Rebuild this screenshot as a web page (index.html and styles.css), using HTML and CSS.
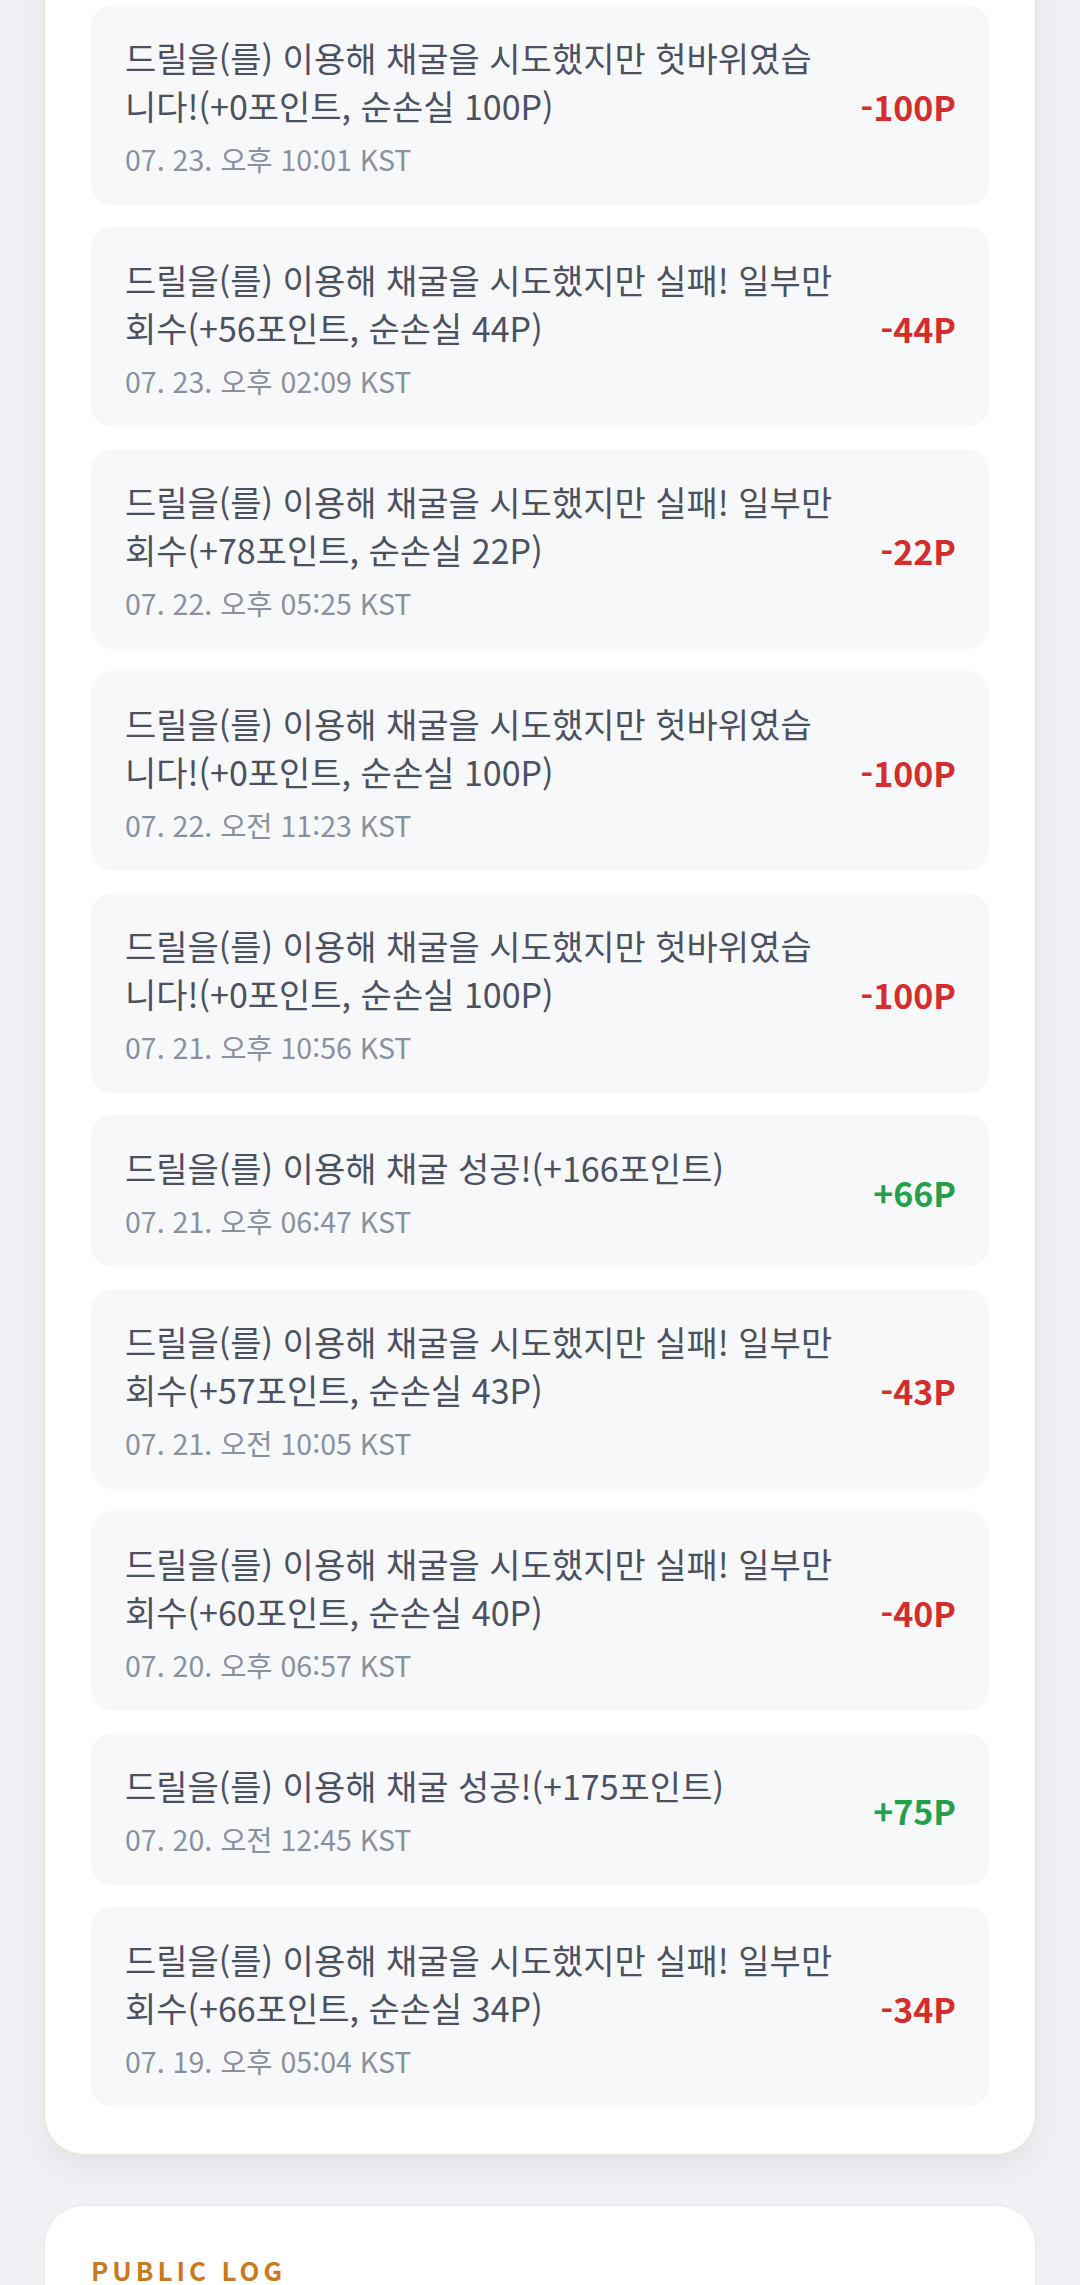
FILE: index.html
```html
<!DOCTYPE html>
<html lang="ko">
<head>
<meta charset="utf-8">
<title>Mining log</title>
<link rel="stylesheet" href="styles.css">
</head>
<body>
<main class="page">
  <section class="card history">
    <ul class="log-list">
      <li class="log-item">
        <div class="log-text">
          <p class="log-title">드릴을(를) 이용해 채굴을 시도했지만 헛바위였습니다!(+0포인트, 순손실 100P)</p>
          <p class="log-date">07. 23. 오후 10:01 KST</p>
        </div>
        <span class="log-amount minus">-100P</span>
      </li>
      <li class="log-item">
        <div class="log-text">
          <p class="log-title">드릴을(를) 이용해 채굴을 시도했지만 실패! 일부만 회수(+56포인트, 순손실 44P)</p>
          <p class="log-date">07. 23. 오후 02:09 KST</p>
        </div>
        <span class="log-amount minus">-44P</span>
      </li>
      <li class="log-item">
        <div class="log-text">
          <p class="log-title">드릴을(를) 이용해 채굴을 시도했지만 실패! 일부만 회수(+78포인트, 순손실 22P)</p>
          <p class="log-date">07. 22. 오후 05:25 KST</p>
        </div>
        <span class="log-amount minus">-22P</span>
      </li>
      <li class="log-item">
        <div class="log-text">
          <p class="log-title">드릴을(를) 이용해 채굴을 시도했지만 헛바위였습니다!(+0포인트, 순손실 100P)</p>
          <p class="log-date">07. 22. 오전 11:23 KST</p>
        </div>
        <span class="log-amount minus">-100P</span>
      </li>
      <li class="log-item">
        <div class="log-text">
          <p class="log-title">드릴을(를) 이용해 채굴을 시도했지만 헛바위였습니다!(+0포인트, 순손실 100P)</p>
          <p class="log-date">07. 21. 오후 10:56 KST</p>
        </div>
        <span class="log-amount minus">-100P</span>
      </li>
      <li class="log-item">
        <div class="log-text">
          <p class="log-title">드릴을(를) 이용해 채굴 성공!(+166포인트)</p>
          <p class="log-date">07. 21. 오후 06:47 KST</p>
        </div>
        <span class="log-amount plus">+66P</span>
      </li>
      <li class="log-item">
        <div class="log-text">
          <p class="log-title">드릴을(를) 이용해 채굴을 시도했지만 실패! 일부만 회수(+57포인트, 순손실 43P)</p>
          <p class="log-date">07. 21. 오전 10:05 KST</p>
        </div>
        <span class="log-amount minus">-43P</span>
      </li>
      <li class="log-item">
        <div class="log-text">
          <p class="log-title">드릴을(를) 이용해 채굴을 시도했지만 실패! 일부만 회수(+60포인트, 순손실 40P)</p>
          <p class="log-date">07. 20. 오후 06:57 KST</p>
        </div>
        <span class="log-amount minus">-40P</span>
      </li>
      <li class="log-item">
        <div class="log-text">
          <p class="log-title">드릴을(를) 이용해 채굴 성공!(+175포인트)</p>
          <p class="log-date">07. 20. 오전 12:45 KST</p>
        </div>
        <span class="log-amount plus">+75P</span>
      </li>
      <li class="log-item">
        <div class="log-text">
          <p class="log-title">드릴을(를) 이용해 채굴을 시도했지만 실패! 일부만 회수(+66포인트, 순손실 34P)</p>
          <p class="log-date">07. 19. 오후 05:04 KST</p>
        </div>
        <span class="log-amount minus">-34P</span>
      </li>
    </ul>
  </section>

  <section class="card public">
    <h2 class="eyebrow">PUBLIC LOG</h2>
  </section>
</main>
</body>
</html>
```

FILE: styles.css
```css
* {
  box-sizing: border-box;
}

html, body {
  margin: 0;
  padding: 0;
}

body {
  background: #eff1f4;
  font-family: "Noto Sans CJK KR", "Noto Sans", sans-serif;
  color: #4a5060;
}

.page {
  display: flex;
  flex-direction: column;
  gap: 50px;
  padding: 0 44px;
  height: 2285px;
  overflow: hidden;
}

.card {
  background: #ffffff;
  border-radius: 40px;
}

.history {
  margin-top: -42px;
  padding: 46px 46px 47px;
  border: 1.5px solid #f2e4cb;
  box-shadow: 0 12px 30px rgba(40, 50, 70, 0.07);
}

.log-list {
  list-style: none;
  margin: 0;
  padding: 0;
  display: flex;
  flex-direction: column;
  gap: 22px;
}

.log-item {
  display: flex;
  align-items: center;
  gap: 30px;
  padding: 29px 33px 26px 34px;
  background: #f7f8fa;
  border-radius: 21px;
}

.log-text {
  flex: 1;
  min-width: 0;
}

.log-title {
  margin: 0;
  font-size: 34px;
  line-height: 48px;
  color: #4b5161;
}

.log-date {
  margin: 9px 0 0;
  font-size: 28.5px;
  line-height: 40px;
  color: #8a919e;
}

.log-amount {
  flex: none;
  font-size: 34px;
  font-weight: 700;
  line-height: 48px;
}

.log-amount.minus {
  color: #d32d2d;
}

.log-amount.plus {
  color: #24a04c;
}

.public {
  flex: none;
  padding: 44px 46px;
  border: 1.5px solid #e6e8ec;
  min-height: 200px;
}

.eyebrow {
  margin: 0;
  font-size: 26px;
  line-height: 40px;
  font-weight: 700;
  letter-spacing: 4px;
  color: #c9791f;
}
```
